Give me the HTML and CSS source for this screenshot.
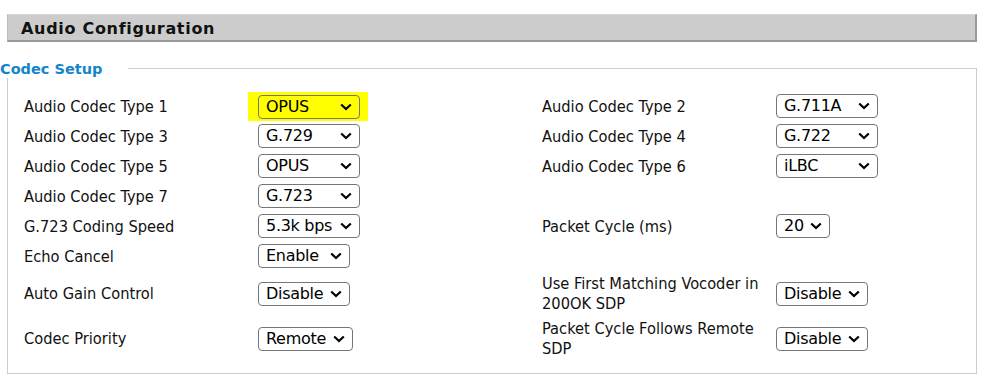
FILE: index.html
```html
<!DOCTYPE html>
<html>
<head>
<meta charset="utf-8">
<link rel="stylesheet" href="styles.css">
</head>
<body>
<div class="page">
  <div class="title">Audio Configuration</div>
  <fieldset class="group">
    <legend>Codec Setup</legend>
    <div class="grid">
      <div class="lbl">Audio Codec Type 1</div>
      <div class="cell"><span class="hl"><span class="sel w102"><span class="val">OPUS</span><svg class="chev" viewBox="0 0 12 8"><path d="M1.2 1.5 6 6 10.8 1.5"/></svg></span></span></div>
      <div class="lbl">Audio Codec Type 2</div>
      <div class="cell"><span class="sel w102"><span class="val">G.711A</span><svg class="chev" viewBox="0 0 12 8"><path d="M1.2 1.5 6 6 10.8 1.5"/></svg></span></div>

      <div class="lbl">Audio Codec Type 3</div>
      <div class="cell"><span class="sel w102"><span class="val">G.729</span><svg class="chev" viewBox="0 0 12 8"><path d="M1.2 1.5 6 6 10.8 1.5"/></svg></span></div>
      <div class="lbl">Audio Codec Type 4</div>
      <div class="cell"><span class="sel w102"><span class="val">G.722</span><svg class="chev" viewBox="0 0 12 8"><path d="M1.2 1.5 6 6 10.8 1.5"/></svg></span></div>

      <div class="lbl">Audio Codec Type 5</div>
      <div class="cell"><span class="sel w102"><span class="val">OPUS</span><svg class="chev" viewBox="0 0 12 8"><path d="M1.2 1.5 6 6 10.8 1.5"/></svg></span></div>
      <div class="lbl">Audio Codec Type 6</div>
      <div class="cell"><span class="sel w102"><span class="val">iLBC</span><svg class="chev" viewBox="0 0 12 8"><path d="M1.2 1.5 6 6 10.8 1.5"/></svg></span></div>

      <div class="lbl">Audio Codec Type 7</div>
      <div class="cell"><span class="sel w102"><span class="val">G.723</span><svg class="chev" viewBox="0 0 12 8"><path d="M1.2 1.5 6 6 10.8 1.5"/></svg></span></div>
      <div class="lbl"></div>
      <div class="cell"></div>

      <div class="lbl">G.723 Coding Speed</div>
      <div class="cell"><span class="sel w102"><span class="val">5.3k bps</span><svg class="chev" viewBox="0 0 12 8"><path d="M1.2 1.5 6 6 10.8 1.5"/></svg></span></div>
      <div class="lbl">Packet Cycle (ms)</div>
      <div class="cell"><span class="sel w54"><span class="val">20</span><svg class="chev" viewBox="0 0 12 8"><path d="M1.2 1.5 6 6 10.8 1.5"/></svg></span></div>

      <div class="lbl">Echo Cancel</div>
      <div class="cell"><span class="sel w92"><span class="val">Enable</span><svg class="chev" viewBox="0 0 12 8"><path d="M1.2 1.5 6 6 10.8 1.5"/></svg></span></div>
      <div class="lbl"></div>
      <div class="cell"></div>

      <div class="lbl">Auto Gain Control</div>
      <div class="cell"><span class="sel w92"><span class="val">Disable</span><svg class="chev" viewBox="0 0 12 8"><path d="M1.2 1.5 6 6 10.8 1.5"/></svg></span></div>
      <div class="lbl">Use First Matching Vocoder in 200OK SDP</div>
      <div class="cell"><span class="sel w92"><span class="val">Disable</span><svg class="chev" viewBox="0 0 12 8"><path d="M1.2 1.5 6 6 10.8 1.5"/></svg></span></div>

      <div class="lbl">Codec Priority</div>
      <div class="cell"><span class="sel w95"><span class="val">Remote</span><svg class="chev" viewBox="0 0 12 8"><path d="M1.2 1.5 6 6 10.8 1.5"/></svg></span></div>
      <div class="lbl">Packet Cycle Follows Remote SDP</div>
      <div class="cell"><span class="sel w92"><span class="val">Disable</span><svg class="chev" viewBox="0 0 12 8"><path d="M1.2 1.5 6 6 10.8 1.5"/></svg></span></div>
    </div>
  </fieldset>
</div>
</body>
</html>
```

FILE: styles.css
```css
html, body {
  margin: 0;
  padding: 0;
  background: #fff;
}

.page {
  padding: 14px 9px 0 7px;
  font-family: "DejaVu Sans Condensed", "DejaVu Sans", sans-serif;
  font-stretch: condensed;
  color: #000;
}

.title {
  height: 23px;
  background: #cccccc;
  border-top: 1px solid #d8d8d8;
  border-left: 1px solid #bbbbbb;
  border-right: 2px solid #999999;
  border-bottom: 2px solid #999999;
  padding: 2px 0 0 13px;
  font-family: "DejaVu Sans", sans-serif;
  font-stretch: normal;
  font-weight: bold;
  font-size: 16px;
  letter-spacing: 0.7px;
  line-height: 23px;
  color: #111;
}

.group {
  margin: 16px 0 0 0;
  border: 1px solid #cccccc;
  padding: 13px 0 12px 16px;
  min-width: 0;
}

.group legend {
  margin-left: -24px;
  padding: 3px 26px 0 0;
  font-family: "DejaVu Sans", sans-serif;
  font-stretch: normal;
  font-weight: bold;
  font-size: 14.5px;
  line-height: 17px;
  color: #1485cc;
}

.grid {
  display: grid;
  grid-template-columns: 224px 294px 224px 1fr;
  grid-auto-rows: minmax(30px, auto);
  align-items: center;
}

.lbl {
  font-size: 16.3px;
  line-height: 20px;
  padding: 3px 0 2px;
  color: #111;
}

.cell {
  padding-left: 10px;
  display: flex;
  align-items: center;
}

.hl {
  display: inline-flex;
  margin-left: -10px;
  padding: 3px 8px 2px 10px;
  background: #ffff00;
}

.sel {
  box-sizing: border-box;
  height: 24px;
  display: inline-flex;
  align-items: center;
  justify-content: space-between;
  border: 1px solid #767676;
  border-radius: 4px;
  background: #fff;
  padding: 0 7px 0 7px;
  font-family: "DejaVu Sans", sans-serif;
  font-stretch: normal;
  font-size: 16px;
  letter-spacing: -0.3px;
  line-height: 20px;
  color: #000;
  white-space: nowrap;
}

.hl .sel {
  background: #ffff00;
}

.w102 { width: 102px; }
.w92 { width: 92px; }
.w95 { width: 95px; }
.w54 { width: 54px; }

.chev {
  width: 12px;
  height: 8px;
  flex: none;
  fill: none;
  stroke: #000;
  stroke-width: 2.2;
}
```
